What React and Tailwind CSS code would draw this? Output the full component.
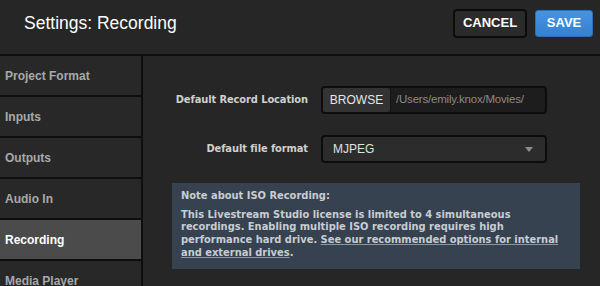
const NAV = ['Project Format', 'Inputs', 'Outputs', 'Audio In', 'Recording', 'Media Player']

function NavItem({ label, active }) {
  return (
    <div
      className={`h-[39px] shrink-0 flex items-center pl-[5px] font-['Liberation_Sans',Arial,sans-serif] font-bold text-[12px] ${
        active ? 'bg-[#4b4b4b] text-white' : 'bg-[#282828] text-[#a9a9a9]'
      }`}
    >
      {label}
    </div>
  )
}

export default function App() {
  return (
    <div className="w-[600px] h-[286px] overflow-hidden bg-[#0e0e0e] flex flex-col">
      {/* Header */}
      <div className="h-[54px] shrink-0 bg-[#262626] flex items-center justify-between pl-[24px] pr-[7px]">
        <h1 className="font-['Liberation_Sans',Arial,sans-serif] text-[17.5px] text-white -mt-[8px]">
          Settings: Recording
        </h1>
        <div className="flex items-start gap-[8px] -mt-[8px]">
          <button className="w-[74px] h-[29px] rounded-[4px] border-2 border-[#0b0b0b] bg-[#2b2b2b] text-white font-['Liberation_Sans',Arial,sans-serif] font-bold text-[13px]">
            CANCEL
          </button>
          <button className="w-[58px] h-[27px] mt-[1px] rounded-[3px] border border-[#2e6fb5] bg-gradient-to-b from-[#4594e3] to-[#3480d2] text-white font-['Liberation_Sans',Arial,sans-serif] font-bold text-[13px]">
            SAVE
          </button>
        </div>
      </div>

      <div className="flex flex-1 min-h-0 mt-[2px] gap-[2px]">
        {/* Sidebar */}
        <div className="w-[141px] shrink-0 flex flex-col gap-[2px]">
          {NAV.map(n => (
            <NavItem key={n} label={n} active={n === 'Recording'} />
          ))}
        </div>

        {/* Content */}
        <div className="flex-1 bg-[#262626] pt-[30px]">
          <div className="grid grid-cols-[165px_226px] gap-x-[13px] gap-y-[21px] items-center">
            <label className="text-right font-['DejaVu_Sans_Condensed','DejaVu_Sans',sans-serif] font-bold text-[11px] tracking-[-0.1px] text-[#cfcfcf]">
              Default Record Location
            </label>
            <div className="h-[28px] flex rounded-[4px] border-2 border-[#0c0c0c] bg-[#1d1d1d] overflow-hidden">
              <div className="w-[68px] shrink-0 flex items-center justify-center bg-[#333333] border-r border-[#141414] rounded-r-[3px] font-['Liberation_Sans',Arial,sans-serif] text-[12px] text-[#e6e6e6]">
                BROWSE
              </div>
              <div className="flex items-center pl-[5px] font-['Liberation_Sans',Arial,sans-serif] text-[11.5px] text-[#8a8a8a] tracking-[-0.2px]">
                /Users/emily.knox/Movies/
              </div>
            </div>

            <label className="text-right font-['DejaVu_Sans_Condensed','DejaVu_Sans',sans-serif] font-bold text-[11px] tracking-[-0.1px] text-[#cfcfcf]">
              Default file format
            </label>
            <div className="h-[28px] flex items-center justify-between rounded-[4px] border-2 border-[#0c0c0c] bg-[#2c2c2c] pl-[10px] pr-[12px]">
              <span className="font-['Liberation_Sans',Arial,sans-serif] text-[12px] text-[#e0e0e0]">MJPEG</span>
              <svg width="8" height="5" viewBox="0 0 8 5">
                <path d="M0 0h8L4 5z" fill="#8c8c8c" />
              </svg>
            </div>
          </div>

          <div className="mt-[20px] ml-[29px] w-[408px] h-[86px] bg-[#36424f] pl-[9px] pr-[6px] pt-[7px] font-['DejaVu_Sans_Condensed','DejaVu_Sans',sans-serif] font-bold text-[11px] leading-[12.7px] text-[#c8cdd3]">
            <p className="mb-[6px]">Note about ISO Recording:</p>
            <p>
              This Livestream Studio license is limited to 4 simultaneous recordings. Enabling multiple ISO recording
              requires high performance hard drive.{' '}
              <span className="inline-block leading-[12.7px] underline underline-offset-1 decoration-[#8d96a0]">
                See our recommended options for internal
              </span>{' '}
              <span className="inline-block leading-[12.7px] underline underline-offset-1 decoration-[#8d96a0]">
                and external drives
              </span>
              .
            </p>
          </div>
        </div>
      </div>
    </div>
  )
}
